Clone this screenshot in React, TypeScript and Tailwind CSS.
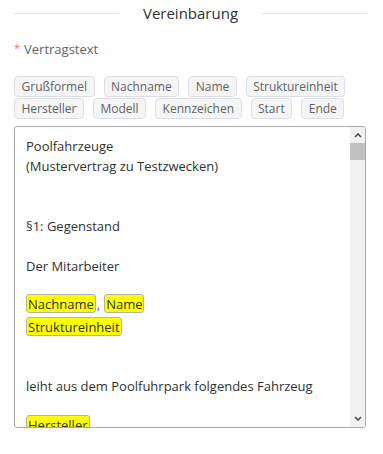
import React from "react";

const font = { fontFamily: '"Open Sans", "Noto Sans", Arial, sans-serif' };

const row1 = ["Grußformel", "Nachname", "Name", "Struktureinheit"];
const row2 = ["Hersteller", "Modell", "Kennzeichen", "Start", "Ende"];

function TagButton({ label }: { label: string }) {
  return (
    <button className="h-[21px] px-[6.5px] border border-[#dcdfe6] rounded-[4px] bg-[#f5f5f5] text-[12px] leading-none text-[#606266]">
      {label}
    </button>
  );
}

function Chip({ children }: { children: React.ReactNode }) {
  return (
    <span className="mt-[1px] h-[19px] flex items-center bg-[#ffff00] border border-[#b3b3a0] rounded-[3px] px-[1px]">
      {children}
    </span>
  );
}

function Arrow({ up }: { up?: boolean }) {
  return (
    <div className="h-[16px] flex items-center justify-center">
      <svg width="8" height="6" viewBox="0 0 8 6">
        <path
          d={up ? "M1 5 L4 2 L7 5" : "M1 1 L4 4 L7 1"}
          fill="none"
          stroke="#505050"
          strokeWidth="1.6"
        />
      </svg>
    </div>
  );
}

export default function App() {
  return (
    <div style={font} className="w-[383px] h-[454px] bg-white pl-[14px] pr-[16px] pt-[2px]">
      <div className="flex items-center h-[22px]">
        <div className="flex-1 h-px bg-[#e4e4e4]" />
        <span className="px-6 text-[15px] text-[#303133]">Vereinbarung</span>
        <div className="flex-1 h-px bg-[#e4e4e4]" />
      </div>

      <div className="mt-[16px] h-[20px] flex items-center text-[13px] text-[#606266]">
        <span className="text-[#f56c6c] mr-[4px] text-[11px] -mt-[3px]">*</span>
        Vertragstext
      </div>

      <div className="mt-[16px] flex flex-col gap-[1px]">
        <div className="flex gap-[9px]">
          {row1.map((l) => (
            <TagButton key={l} label={l} />
          ))}
        </div>
        <div className="flex gap-[9px]">
          {row2.map((l) => (
            <TagButton key={l} label={l} />
          ))}
        </div>
      </div>

      <div className="mt-[7px] w-[352px] h-[302px] border border-[#a9a9a9] rounded-[3px] flex overflow-hidden">
        <div className="flex-1 overflow-hidden pl-[11px] pt-[9px] text-[13px] leading-[20px] text-[#303133]">
          <div>Poolfahrzeuge</div>
          <div>(Mustervertrag zu Testzwecken)</div>
          <div className="h-[20px]" />
          <div className="h-[20px]" />
          <div>§1: Gegenstand</div>
          <div className="h-[20px]" />
          <div>Der Mitarbeiter</div>
          <div className="h-[17px]" />
          <div className="h-[23px] flex items-start">
            <Chip>Nachname</Chip>
            <span className="mt-[1px] text-[#3060c0] pl-[1px] pr-[4px]">,</span>
            <Chip>Name</Chip>
          </div>
          <div className="h-[23px] flex items-start">
            <Chip>Struktureinheit</Chip>
          </div>
          <div className="h-[18px]" />
          <div className="h-[19px]" />
          <div>leiht aus dem Poolfuhrpark folgendes Fahrzeug</div>
          <div className="h-[18px]" />
          <div className="h-[23px] flex items-start">
            <Chip>Hersteller</Chip>
          </div>
        </div>
        <div className="w-[15px] bg-[#f1f1f1] flex flex-col">
          <Arrow up />
          <div className="h-[17px] bg-[#c1c1c1]" />
          <div className="flex-1" />
          <Arrow />
        </div>
      </div>
    </div>
  );
}
